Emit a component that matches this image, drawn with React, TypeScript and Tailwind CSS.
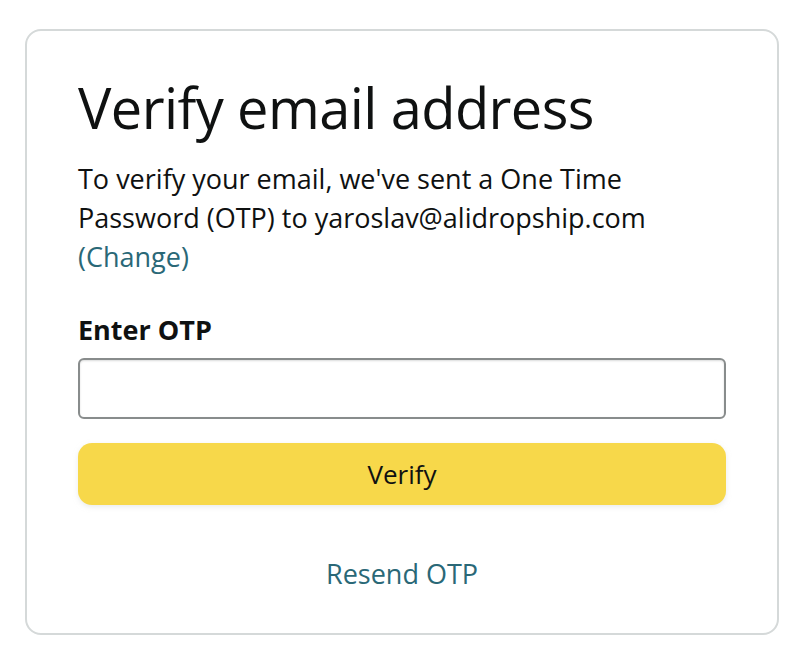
export default function App() {
  return (
    <div className="min-h-screen bg-white px-[25px] py-[29px] font-['Open_Sans',sans-serif] text-[#0f1111]">
      <div className="h-[606px] rounded-[16px] border-2 border-[#d5d9d9] px-[51px] pt-[40px]">
        <h1 className="text-[56px] leading-[72px] font-normal tracking-[-0.6px]">Verify email address</h1>
        <p className="mt-[16px] w-[600px] text-[27px] leading-[39px]">
          To verify your email, we've sent a One Time Password (OTP) to yaroslav@alidropship.com
          <br />
          <a href="#" className="text-[#2a6877]">(Change)</a>
        </p>
        <label className="mt-[36px] block text-[27px] leading-[36px] font-bold">Enter OTP</label>
        <input
          type="text"
          className="mt-[10px] block h-[61px] w-full rounded-[6px] border-2 border-[#888c8c] bg-white px-3 text-[26px] shadow-[inset_0_1px_2px_rgba(15,17,17,0.15)] outline-none"
        />
        <button className="mt-[24px] block h-[62px] w-full rounded-[14px] bg-[#f7d84a] text-[26px] text-[#0f1111] shadow-[0_2px_5px_rgba(213,217,217,0.5)]">
          Verify
        </button>
        <div className="mt-[49px] text-center">
          <a href="#" className="text-[27px] text-[#2a6877]">Resend OTP</a>
        </div>
      </div>
    </div>
  )
}
